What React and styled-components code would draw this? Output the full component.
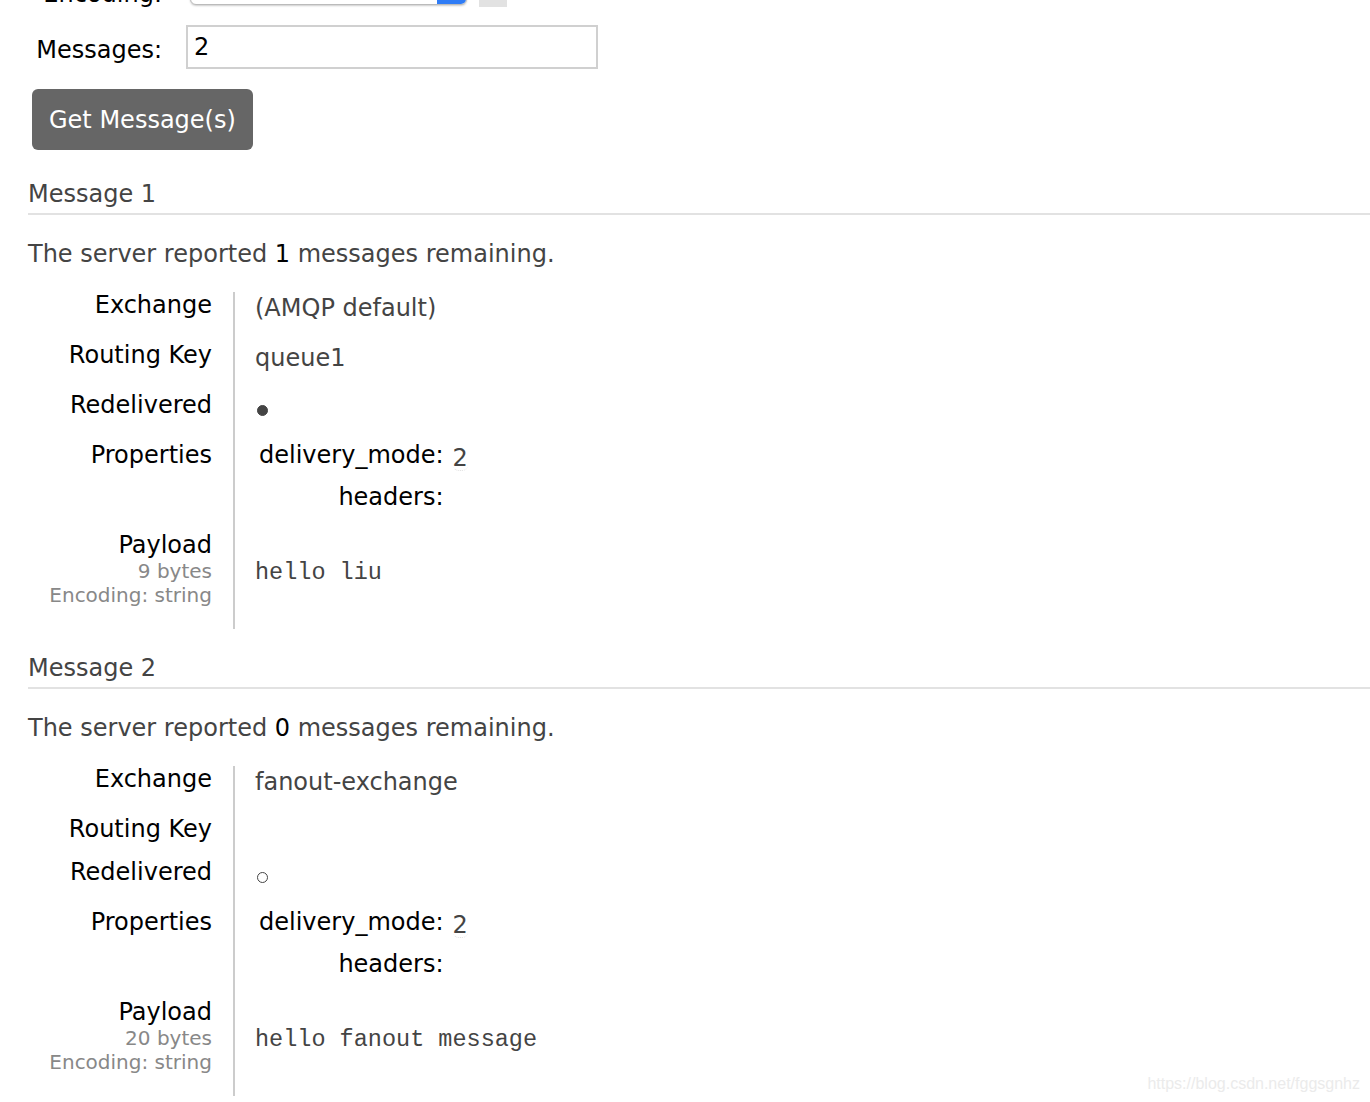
import React from "react"
import styled, { createGlobalStyle } from "styled-components"

const messages = [
    {
        remaining: 1,
        exchange: "(AMQP default)",
        routingKey: "queue1",
        redelivered: true,
        deliveryMode: 2,
        bytes: 9,
        payload: "hello liu",
    },
    {
        remaining: 0,
        exchange: "fanout-exchange",
        routingKey: "",
        redelivered: false,
        deliveryMode: 2,
        bytes: 20,
        payload: "hello fanout message",
    },
]

const App = () => {
    const [count, setCount] = React.useState("2")

    const MessageList = messages.map((msg, index) => (
        <MessageBlock key={index + 1}>
            <MessageTitle>Message {index + 1}</MessageTitle>
            <Remaining>
                The server reported <b>{msg.remaining}</b> messages remaining.
            </Remaining>
            <Facts>
                <Row>
                    <Label>Exchange</Label>
                    <Value>{msg.exchange}</Value>
                </Row>
                <Row>
                    <Label>Routing Key</Label>
                    <Value>{msg.routingKey}</Value>
                </Row>
                <Row>
                    <Label>Redelivered</Label>
                    <Value>
                        <Dot filled={msg.redelivered} />
                    </Value>
                </Row>
                <Row>
                    <Label>Properties</Label>
                    <Value flat>
                        <PropsGrid>
                            <PropKey>delivery_mode:</PropKey>
                            <PropVal>
                                <Abbr>{msg.deliveryMode}</Abbr>
                            </PropVal>
                            <PropKey>headers:</PropKey>
                            <PropVal />
                        </PropsGrid>
                    </Value>
                </Row>
                <Row last>
                    <Label>
                        Payload
                        <SubLabel>{msg.bytes} bytes</SubLabel>
                        <SubLabel>Encoding: string</SubLabel>
                    </Label>
                    <Value middle>
                        <Payload>{msg.payload}</Payload>
                    </Value>
                </Row>
            </Facts>
        </MessageBlock>
    ))

    return (
        <Page>
            <GlobalStyle />
            <Form>
                <FormRow lowLabel>
                    <FormLabel lowLabel>Encoding:</FormLabel>
                    <FakeSelect>
                        <SelectArrow />
                    </FakeSelect>
                    <HelpBox />
                </FormRow>
                <FormRow>
                    <FormLabel>Messages:</FormLabel>
                    <TextInput
                        value={count}
                        onChange={(e) => setCount(e.target.value)}
                    />
                </FormRow>
                <Button>Get Message(s)</Button>
            </Form>
            {MessageList}
            <Watermark>https://blog.csdn.net/fggsgnhz</Watermark>
        </Page>
    )
}

const GlobalStyle = createGlobalStyle`
    html, body {
        margin: 0;
        padding: 0;
        background: #fff;
    }
    body {
        font-family: "DejaVu Sans", Verdana, sans-serif;
        font-size: 24px;
        color: #444;
        overflow-x: hidden;
    }
`
const Page = styled.div`
    display: flow-root;
    position: relative;
    padding: 0 0 40px 28px;
`
const Form = styled.div`
    display: flex;
    flex-direction: column;
    align-items: flex-start;
    gap: 20px;
    margin-top: -30px;
`
const FormRow = styled.div`
    display: flex;
    align-items: ${props => props.lowLabel ? "flex-end" : "center"};
    width: 600px;
`
const FormLabel = styled.label`
    width: 134px;
    text-align: right;
    color: #000;
    line-height: 27px;
    margin: 0 24px ${props => props.lowLabel ? "-3px" : "0"} 0;
    padding-top: ${props => props.lowLabel ? "0" : "6px"};
`
const FakeSelect = styled.div`
    position: relative;
    width: 275px;
    height: 33px;
    margin: 0 12px 0 4px;
    border: 1px solid #bbb;
    border-radius: 6px;
    box-shadow: 0 1px 2px rgba(0, 0, 0, 0.2);
    background: #fff;
    overflow: hidden;
`
const SelectArrow = styled.span`
    position: absolute;
    right: 0;
    top: 0;
    bottom: 0;
    width: 29px;
    background: #2f7cf6;
`
const HelpBox = styled.span`
    width: 28px;
    height: 28px;
    margin-bottom: -2px;
    background: #e2e2e2;
`
const TextInput = styled.input`
    width: 412px;
    height: 44px;
    box-sizing: border-box;
    border: 2px solid #d0d0d0;
    padding: 0 6px 0;
    font-family: "DejaVu Sans", Verdana, sans-serif;
    font-size: 24px;
    color: #000;
    outline: none;
`
const Button = styled.button`
    margin-left: 4px;
    height: 61px;
    padding: 0 17px;
    border: none;
    border-radius: 6px;
    background: #666;
    color: #fff;
    font-family: "DejaVu Sans", Verdana, sans-serif;
    font-size: 24px;
    cursor: pointer;
`
const MessageBlock = styled.section`
    margin-top: 31px;
    & + & {
        margin-top: 26px;
    }
`
const MessageTitle = styled.h3`
    margin: 0;
    padding-bottom: 5px;
    border-bottom: 2px solid #e2e2e2;
    font-size: 24px;
    font-weight: normal;
    line-height: 27px;
    color: #444;
`
const Remaining = styled.p`
    margin: 26px 0 24px;
    line-height: 27px;
    b {
        font-weight: normal;
        color: #000;
    }
`
const Facts = styled.div`
    display: flex;
    flex-direction: column;
`
const Row = styled.div`
    display: grid;
    grid-template-columns: 207px 1fr;
    line-height: 27px;
    & > label {
        padding-bottom: ${props => props.last ? "22px" : "16px"};
    }
`
const Label = styled.label`
    display: flex;
    flex-direction: column;
    align-items: flex-end;
    padding-right: 21px;
    border-right: 2px solid #ccc;
    color: #000;
`
const SubLabel = styled.span`
    font-size: 20px;
    line-height: 24px;
    color: #888;
`
const Value = styled.div`
    display: flex;
    align-items: ${props => props.middle ? "center" : "flex-start"};
    padding: ${props => props.flat ? "0 0 21px 20px" : "3px 0 20px 20px"};
    color: #444;
`
const Dot = styled.span`
    width: 11px;
    height: 11px;
    margin: 10px 0 6px 2px;
    border-radius: 50%;
    box-sizing: border-box;
    border: 1.5px solid #444;
    background: ${props => props.filled ? "#444" : "transparent"};
`
const PropsGrid = styled.div`
    display: grid;
    grid-template-columns: auto auto;
    row-gap: 12px;
    column-gap: 9px;
    margin-left: 4px;
`
const PropKey = styled.span`
    text-align: right;
    color: #000;
`
const PropVal = styled.span`
    color: #444;
    padding-top: 3px;
`
const Abbr = styled.span`
    display: inline-block;
    border-bottom: 1px dotted #ddd;
    border-radius: 0 0 6px 6px;
    line-height: 24px;
`
const Payload = styled.pre`
    margin: 0;
    font-family: "Liberation Mono", "Courier New", monospace;
    font-size: 23.5px;
    color: #444;
`
const Watermark = styled.span`
    position: absolute;
    top: 1075px;
    right: 10px;
    font-family: "Liberation Sans", Arial, sans-serif;
    font-size: 16px;
    color: #ebebeb;
`

export default App
